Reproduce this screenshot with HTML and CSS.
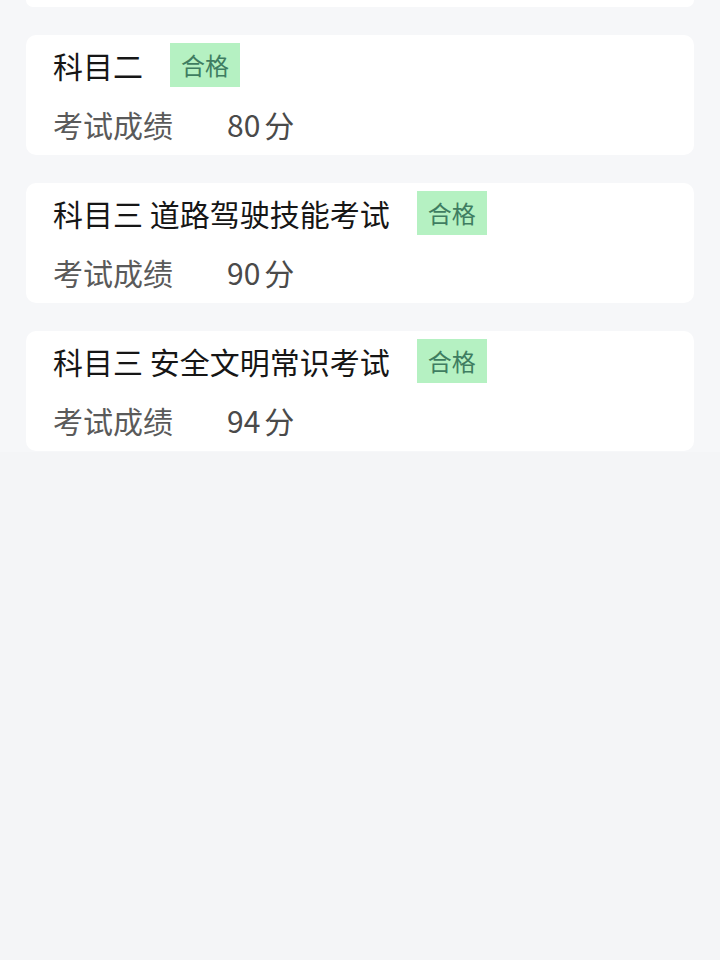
FILE: index.html
```html
<!DOCTYPE html>
<html lang="zh-CN">
<head>
<meta charset="utf-8">
<title>考试成绩</title>
<link rel="stylesheet" href="styles.css">
</head>
<body>
<div class="viewport">
  <div class="list">
    <div class="card card-partial"></div>
    <div class="card">
      <div class="head"><span class="title">科目二</span><span class="badge">合格</span></div>
      <div class="row"><span class="label">考试成绩</span><span class="score">80<span class="unit">分</span></span></div>
    </div>
    <div class="card">
      <div class="head"><span class="title">科目三 道路驾驶技能考试</span><span class="badge">合格</span></div>
      <div class="row"><span class="label">考试成绩</span><span class="score">90<span class="unit">分</span></span></div>
    </div>
    <div class="card">
      <div class="head"><span class="title">科目三 安全文明常识考试</span><span class="badge">合格</span></div>
      <div class="row"><span class="label">考试成绩</span><span class="score">94<span class="unit">分</span></span></div>
    </div>
  </div>
</div>
</body>
</html>
```

FILE: styles.css
```css
html, body {
  margin: 0;
  padding: 0;
}
body {
  background: #f4f5f7;
  font-family: "Noto Sans CJK SC", "Noto Sans", sans-serif;
  width: 720px;
  height: 960px;
  overflow: hidden;
}
.viewport {
  height: 452px;
  overflow: hidden;
  background: #f6f7f9;
}
.list {
  display: flex;
  flex-direction: column;
  gap: 28px;
  padding: 0 26px;
}
.card {
  background: #ffffff;
  border-radius: 10px;
  height: 120px;
  box-sizing: border-box;
  padding: 8px 27px 0;
  display: flex;
  flex-direction: column;
}
.card-partial {
  height: 7px;
  border-radius: 0 0 10px 10px;
  padding: 0;
}
.head {
  display: flex;
  align-items: center;
  height: 44px;
}
.title {
  font-size: 30px;
  color: #161616;
  line-height: 44px;
}
.badge {
  margin-left: 27px;
  height: 44px;
  line-height: 44px;
  padding: 0 11px;
  background: #b5f1c2;
  color: #3f7d61;
  font-size: 24px;
}
.row {
  display: flex;
  align-items: center;
  height: 44px;
  margin-top: 15px;
}
.label {
  width: 174px;
  font-size: 30px;
  color: #5a5a5a;
}
.score {
  font-size: 30px;
  color: #4a4a4a;
}
.unit {
  margin-left: 4px;
}
```
